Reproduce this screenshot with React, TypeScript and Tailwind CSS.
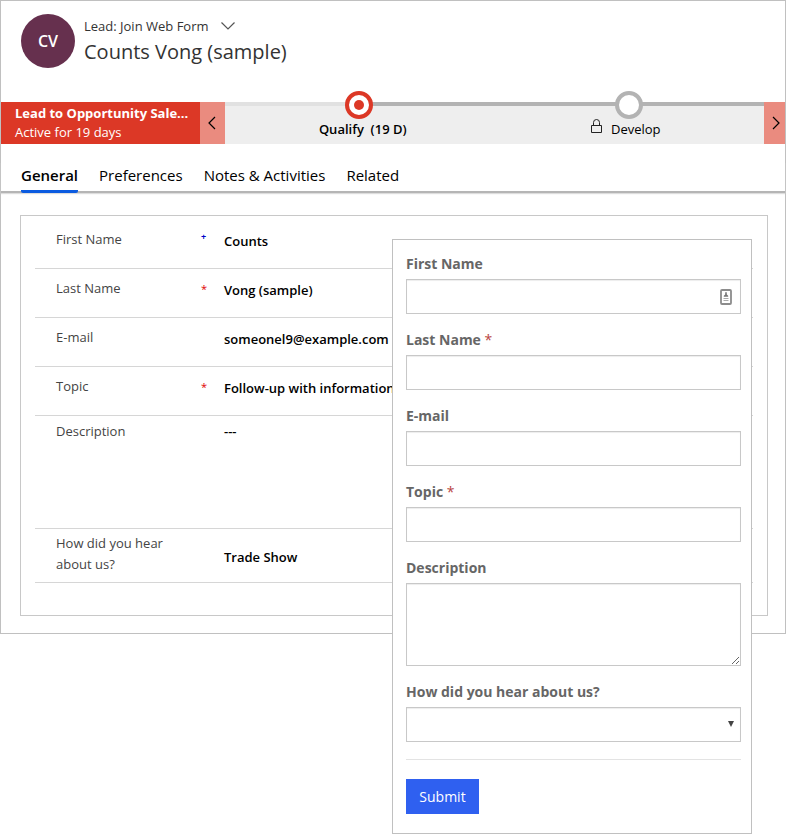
import React from "react";

type Mark = "recommended" | "required";

interface RecordRow {
  label: string;
  value: string;
  mark?: Mark;
  row: string;
  labelBox: string;
  valueBox: string;
}

const rows: RecordRow[] = [
  { label: "First Name", value: "Counts", mark: "recommended", row: "h-[49px]", labelBox: "pt-[9px]", valueBox: "pt-[11px]" },
  { label: "Last Name", value: "Vong (sample)", mark: "required", row: "h-[49px]", labelBox: "pt-[9px]", valueBox: "pt-[11px]" },
  { label: "E-mail", value: "someonel9@example.com", row: "h-[49px]", labelBox: "pt-[9px]", valueBox: "pt-[11px]" },
  { label: "Topic", value: "Follow-up with information", mark: "required", row: "h-[49px]", labelBox: "pt-[9px]", valueBox: "pt-[11px]" },
  { label: "Description", value: "---", row: "h-[113px]", labelBox: "pt-[5px]", valueBox: "pt-[5px]" },
  { label: "How did you hear about us?", value: "Trade Show", row: "h-[54px]", labelBox: "pt-1", valueBox: "pt-[18px]" },
];

function Chevron({ d, className }: { d: string; className: string }) {
  return (
    <svg viewBox="0 0 14 14" className={className} fill="none" stroke="currentColor" strokeWidth="1.2" aria-hidden="true">
      <path d={d} />
    </svg>
  );
}

function LockIcon() {
  return (
    <svg width="12" height="15" viewBox="0 0 12 15" fill="none" stroke="#222" aria-hidden="true">
      <path d="M0.5 6.5h10v7h-10z" />
      <path d="M2.500 6.500V3.500a3 3 0 0 1 6 0v3" />
    </svg>
  );
}

function ContactCardIcon() {
  return (
    <svg width="12" height="16" viewBox="0 0 12 16" aria-hidden="true">
      <rect x="1" y="1" width="10" height="14" rx="1" fill="#fff" stroke="#8c8c8c" strokeWidth="1.8" />
      <path d="M5.2 3.200h1.600v2.400l1.400 1.200v1H3.800v-1l1.400-1.200z" fill="#777" />
      <path d="M3.500 9.500h5M3.500 11.500h5" stroke="#aaa" />
    </svg>
  );
}

function Header() {
  return (
    <header className="flex gap-[10px] pt-[13px] pl-5">
      <div className="flex size-[54px] items-center justify-center rounded-full bg-[#66304e] text-[16px] font-semibold text-white">
        CV
      </div>
      <div className="-ml-px pt-[2px]">
        <button type="button" className="flex items-center gap-3 text-[13px] leading-5 text-[#333]">
          Lead: Join Web Form
          <Chevron d="M0.5 3.5 7 10l6.500-6.500" className="size-[14px] text-[#555]" />
        </button>
        <h1 className="text-[20px] leading-[32px] text-[#333]">Counts Vong (sample)</h1>
      </div>
    </header>
  );
}

function ProcessBar() {
  return (
    <div className="mt-[34px] flex h-[42px]">
      <div className="w-[199px] shrink-0 bg-[#dc3826] pt-[2px] pl-[14px] text-white">
        <div className="text-[13px] leading-[19px] font-bold whitespace-nowrap">Lead to Opportunity Sale...</div>
        <div className="text-[13px] leading-[19px]">Active for 19 days</div>
      </div>
      <button type="button" aria-label="Previous stage" className="flex w-[25px] shrink-0 items-center justify-center bg-[#ea8b7f] pr-px text-black">
        <Chevron d="M10 1 4 7l6 6" className="size-[14px]" />
      </button>
      <ol className="grid grow grid-cols-2 bg-[#eee]">
        <li className="relative text-center">
          <div className="flex h-1">
            <div className="w-1/2 bg-[#e1e1e1]" />
            <div className="w-1/2 bg-[#b3b3b3]" />
          </div>
          <span className="absolute -top-[11px] left-1/2 -ml-[15px] flex size-7 items-center justify-center rounded-full border-4 border-[#dc3826] bg-white">
            <span className="size-[10px] rounded-full bg-[#dc3826]" />
          </span>
          <div className="ml-[6px] pt-[13px] text-[13px] leading-5 font-semibold whitespace-pre text-black">Qualify  (19 D)</div>
        </li>
        <li className="relative">
          <div className="h-1 bg-[#b3b3b3]" />
          <span className="absolute -top-[11px] left-1/2 -ml-[14px] size-7 rounded-full border-4 border-[#b3b3b3] bg-white" />
          <div className="flex justify-center gap-2 pt-[13px] pr-[7px] text-[13px] leading-5 text-black">
            <LockIcon />
            Develop
          </div>
        </li>
      </ol>
      <button type="button" aria-label="Next stage" className="flex w-[21px] shrink-0 items-center justify-center bg-[#ea8b7f] pl-[3px] text-black">
        <Chevron d="M4 1l6 6-6 6" className="size-[14px]" />
      </button>
    </div>
  );
}

function Tabs() {
  return (
    <nav className="mt-[18px] flex h-[31px] gap-[21px] border-b-2 border-[#b5b5b5] pl-5 text-[15px] leading-[28px] text-black shadow-[0_1px_1px_#ddd]">
      <button type="button" className="flex h-[31px] items-start rounded-b-[2px] border-b-[3px] border-[#0b5be0] leading-[26px] font-semibold">General</button>
      <button type="button" className="flex h-[26px] items-start leading-[26px]">Preferences</button>
      <button type="button" className="flex h-[26px] items-start leading-[26px]">Notes &amp; Activities</button>
      <button type="button" className="flex h-[26px] items-start leading-[26px]">Related</button>
    </nav>
  );
}

function RecordDetails() {
  return (
    <dl className="mt-[22px] mr-[17px] mb-[17px] ml-[19px] border border-[#c8c8c8] px-[14px] pt-1 pb-8 text-[13px]">
      {rows.map((r) => (
        <div key={r.label} className={`flex border-b border-[#d6d6d6] pl-[21px] leading-[21px] ${r.row}`}>
          <dt className={`w-[145px] shrink-0 pr-4 text-[#444] ${r.labelBox}`}>{r.label}</dt>
          <dd className="w-[23px] shrink-0 pt-[9px]" aria-hidden="true">
            {r.mark === "required" && <span className="text-[11px] text-[#e00000]">*</span>}
            {r.mark === "recommended" && <span className="block text-[9px] leading-[15px] font-bold text-[#0000c8]">+</span>}
          </dd>
          <dd className={`font-semibold whitespace-nowrap text-black ${r.valueBox}`}>{r.value}</dd>
        </div>
      ))}
    </dl>
  );
}

const control =
  "block w-full rounded-none border border-[#c8c8c8] bg-white px-3 text-[14px] text-[#555] shadow-[inset_0_1px_1px_rgba(0,0,0,0.075)] outline-none";

function Field({ id, label, required, children }: { id: string; label: string; required?: boolean; children: React.ReactNode }) {
  return (
    <div className="mb-4">
      <label htmlFor={id} className="mb-[5px] block text-[14px] leading-5 font-bold text-[#666]">
        {label}
        {required && <span className="font-normal text-[#b94442]"> *</span>}
      </label>
      {children}
    </div>
  );
}

function WebForm() {
  return (
    <form
      className="z-10 col-start-1 row-start-1 mt-[239px] mr-[34px] w-[360px] self-start justify-self-end border border-[#c0c0c0] bg-white pt-[14px] pr-[10px] pb-[19px] pl-[13px]"
      onSubmit={(e) => e.preventDefault()}
    >
      <Field id="first" label="First Name">
        <div className="relative">
          <input id="first" type="text" className={`${control} h-[35px]`} />
          <span className="absolute top-[10px] right-[9px]"><ContactCardIcon /></span>
        </div>
      </Field>
      <Field id="last" label="Last Name" required>
        <input id="last" type="text" className={`${control} h-[35px]`} />
      </Field>
      <Field id="email" label="E-mail">
        <input id="email" type="email" className={`${control} h-[35px]`} />
      </Field>
      <Field id="topic" label="Topic" required>
        <input id="topic" type="text" className={`${control} h-[35px]`} />
      </Field>
      <Field id="description" label="Description">
        <textarea id="description" className={`${control} h-[83px] resize`} />
      </Field>
      <Field id="source" label="How did you hear about us?">
        <div className="relative">
          <select id="source" defaultValue="" className={`${control} h-[35px] appearance-none`}>
            <option value=""></option>
            <option>Trade Show</option>
          </select>
          <svg width="6" height="6" viewBox="0 0 6 6" className="pointer-events-none absolute top-[14px] right-[7px]" aria-hidden="true">
            <path d="M0 0h6L3 6z" fill="#444" />
          </svg>
        </div>
      </Field>
      <hr className="mt-[17px] mb-[19px] border-t border-[#e3e3e3]" />
      <button type="submit" className="block h-[35px] w-[73px] bg-[#2f60f0] text-[14px] text-white">Submit</button>
    </form>
  );
}

export default function App() {
  return (
    <main className="grid grid-cols-1 bg-white font-['Open_Sans','Noto_Sans',sans-serif]">
      <section className="col-start-1 row-start-1 self-start border border-[#c0c0c0]">
        <Header />
        <ProcessBar />
        <Tabs />
        <RecordDetails />
      </section>
      <WebForm />
    </main>
  );
}
